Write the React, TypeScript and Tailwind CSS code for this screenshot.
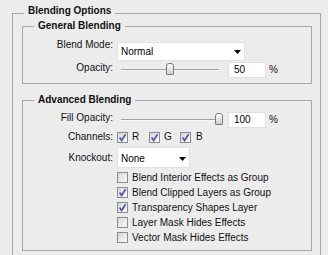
import React from "react";

function Check({ checked }: { checked?: boolean }) {
  return (
    <span className="flex h-[11px] w-[11px] shrink-0 items-center justify-center border border-[#8c8c8c] bg-linear-to-br from-[#d6d6d6] to-[#fafafa]">
      {checked && (
        <svg width="9" height="9" viewBox="0 0 9 9">
          <path d="M1.6 4.6 L3.6 7.4 L7.6 1.2" stroke="#4858a4" strokeWidth="1.7" fill="none" />
        </svg>
      )}
    </span>
  );
}

function Arrow() {
  return (
    <svg width="7" height="4" viewBox="0 0 7 4" className="shrink-0">
      <path d="M0 0 H7 L3.5 4 Z" fill="#000" />
    </svg>
  );
}

function Slider({ value }: { value: number }) {
  return (
    <div className="relative ml-[4px] h-[16px] w-[98px] shrink-0">
      <div className="absolute left-0 right-0 top-[7px] h-[2px] border-t border-[#a2a2a2] bg-[#f8f8f8]" />
      <div
        className="absolute top-[1px] h-[12px] w-[8px] -translate-x-1/2 rounded-t-[3px] rounded-b-[1px] border border-[#7c7c7c] bg-linear-to-b from-[#ffffff] to-[#d0d0d0]"
        style={{ left: `${(value / 100) * 98}px` }}
      />
    </div>
  );
}

function NumInput({ value }: { value: string }) {
  return (
    <div className="ml-[9px] flex h-[16px] w-[38px] shrink-0 items-center border border-[#e0e0e0] bg-white pl-[5px] text-[#000]">
      {value}
    </div>
  );
}

function Label({ children, className = "" }: { children: React.ReactNode; className?: string }) {
  return <div className={`w-[90px] shrink-0 text-right ${className}`}>{children}</div>;
}

function CheckRow({ checked, label }: { checked?: boolean; label: string }) {
  return (
    <div className="flex h-[15px] items-center">
      <div className="w-[94px] shrink-0" />
      <Check checked={checked} />
      <span className="ml-[4px]">{label}</span>
    </div>
  );
}

export default function App() {
  return (
    <div className="h-[255px] w-[328px] overflow-hidden bg-[#ececec] pt-[5px] font-['Liberation_Sans',Arial,sans-serif] text-[10px] leading-[12px] text-[#111]">
      <fieldset className="ml-[12px] mr-[7px] border border-[#a6a6a6] pb-[20px]">
        <legend className="ml-[11px] px-[4px] pb-[5px] font-bold">Blending Options</legend>

        <fieldset className="-mt-[2px] ml-[9px] mr-[8px] border border-[#a6a6a6] pb-[5px]">
          <legend className="ml-[11px] px-[4px] font-bold">General Blending</legend>
          <div className="mt-[10px] flex h-[19px] items-start">
            <Label className="-mt-[3px]">Blend Mode:</Label>
            <div className="ml-[4px] flex h-[19px] w-[128px] items-center justify-between border border-[#e2e2e2] bg-white pl-[3px] pr-[3px] text-[#000]">
              <span>Normal</span>
              <Arrow />
            </div>
          </div>
          <div className="mt-[1px] flex h-[16px] items-start">
            <Label>Opacity:</Label>
            <div className="ml-[4px] flex items-center">
              <Slider value={50} />
              <NumInput value="50" />
              <span className="ml-[3px]">%</span>
            </div>
          </div>
        </fieldset>

        <fieldset className="mt-[10px] ml-[9px] mr-[8px] border border-[#a6a6a6] pb-[5px]">
          <legend className="ml-[11px] px-[4px] font-bold">Advanced Blending</legend>
          <div className="mt-[6px] flex h-[16px] items-start">
            <Label>Fill Opacity:</Label>
            <div className="ml-[4px] flex items-center">
              <Slider value={100} />
              <NumInput value="100" />
              <span className="ml-[3px]">%</span>
            </div>
          </div>
          <div className="mt-[2px] flex h-[14px] items-center">
            <Label>Channels:</Label>
            <div className="ml-[4px] flex items-center">
              <div className="flex w-[32px] items-center">
                <Check checked />
                <span className="ml-[4px]">R</span>
              </div>
              <div className="flex w-[31px] items-center">
                <Check checked />
                <span className="ml-[4px]">G</span>
              </div>
              <div className="flex items-center">
                <Check checked />
                <span className="ml-[5px]">B</span>
              </div>
            </div>
          </div>
          <div className="mt-[3px] flex h-[21px] items-center">
            <Label>Knockout:</Label>
            <div className="ml-[4px] flex h-[21px] w-[73px] items-center justify-between border border-[#e2e2e2] bg-white pl-[3px] pr-[3px] pt-[2px] text-[#000]">
              <span>None</span>
              <Arrow />
            </div>
          </div>
          <div className="mt-[2px]">
            <CheckRow label="Blend Interior Effects as Group" />
            <CheckRow checked label="Blend Clipped Layers as Group" />
            <CheckRow checked label="Transparency Shapes Layer" />
            <CheckRow label="Layer Mask Hides Effects" />
            <CheckRow label="Vector Mask Hides Effects" />
          </div>
        </fieldset>
      </fieldset>
    </div>
  );
}
